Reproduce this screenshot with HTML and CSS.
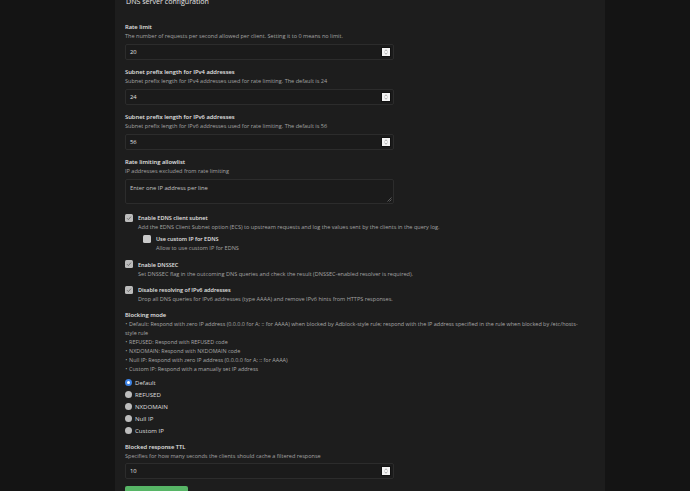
FILE: index.html
```html
<!DOCTYPE html>
<html lang="en">
<head>
<meta charset="utf-8">
<title>DNS server configuration</title>
<link rel="stylesheet" href="styles.css">
</head>
<body>
<div class="page">
  <div class="card">
    <h2 class="title">DNS server configuration</h2>
    <div class="form">
      <div class="field">
        <div class="label">Rate limit</div>
        <div class="desc">The number of requests per second allowed per client. Setting it to 0 means no limit.</div>
        <div class="input"><span>20</span><svg class="spin" viewBox="0 0 8 8" width="8" height="8"><rect x="0" y="0" width="8" height="8" fill="#f4f4f4"/><path d="M2.5 3.2 L4 1.8 L5.5 3.2 M2.5 4.8 L4 6.2 L5.5 4.8" fill="none" stroke="#8a8a8a" stroke-width="0.7"/></svg></div>
      </div>
      <div class="field">
        <div class="label">Subnet prefix length for IPv4 addresses</div>
        <div class="desc">Subnet prefix length for IPv4 addresses used for rate limiting. The default is 24</div>
        <div class="input"><span>24</span><svg class="spin" viewBox="0 0 8 8" width="8" height="8"><rect x="0" y="0" width="8" height="8" fill="#f4f4f4"/><path d="M2.5 3.2 L4 1.8 L5.5 3.2 M2.5 4.8 L4 6.2 L5.5 4.8" fill="none" stroke="#8a8a8a" stroke-width="0.7"/></svg></div>
      </div>
      <div class="field">
        <div class="label">Subnet prefix length for IPv6 addresses</div>
        <div class="desc">Subnet prefix length for IPv6 addresses used for rate limiting. The default is 56</div>
        <div class="input"><span>56</span><svg class="spin" viewBox="0 0 8 8" width="8" height="8"><rect x="0" y="0" width="8" height="8" fill="#f4f4f4"/><path d="M2.5 3.2 L4 1.8 L5.5 3.2 M2.5 4.8 L4 6.2 L5.5 4.8" fill="none" stroke="#8a8a8a" stroke-width="0.7"/></svg></div>
      </div>
      <div class="field">
        <div class="label">Rate limiting allowlist</div>
        <div class="desc">IP addresses excluded from rate limiting</div>
        <div class="textarea"><span class="placeholder">Enter one IP address per line</span><svg class="grip" viewBox="0 0 5 5" width="5" height="5"><path d="M0.5 4.5 L4.5 0.5 M2.5 4.5 L4.5 2.5" stroke="#777" stroke-width="0.7"/></svg></div>
      </div>

      <div class="checks">
        <div class="check">
          <span class="box checked"><svg viewBox="0 0 8 8" width="8" height="8"><path d="M2 4.2 L3.4 5.6 L6 2.6" fill="none" stroke="#666" stroke-width="0.9"/></svg></span>
          <div class="check-text">
            <div class="clabel">Enable EDNS client subnet</div>
            <div class="desc">Add the EDNS Client Subnet option (ECS) to upstream requests and log the values sent by the clients in the query log.</div>
            <div class="check nested">
              <span class="box"></span>
              <div class="check-text">
                <div class="clabel">Use custom IP for EDNS</div>
                <div class="desc">Allow to use custom IP for EDNS</div>
              </div>
            </div>
          </div>
        </div>
        <div class="check">
          <span class="box checked"><svg viewBox="0 0 8 8" width="8" height="8"><path d="M2 4.2 L3.4 5.6 L6 2.6" fill="none" stroke="#666" stroke-width="0.9"/></svg></span>
          <div class="check-text">
            <div class="clabel">Enable DNSSEC</div>
            <div class="desc">Set DNSSEC flag in the outcoming DNS queries and check the result (DNSSEC-enabled resolver is required).</div>
          </div>
        </div>
        <div class="check">
          <span class="box checked"><svg viewBox="0 0 8 8" width="8" height="8"><path d="M2 4.2 L3.4 5.6 L6 2.6" fill="none" stroke="#666" stroke-width="0.9"/></svg></span>
          <div class="check-text">
            <div class="clabel">Disable resolving of IPv6 addresses</div>
            <div class="desc">Drop all DNS queries for IPv6 addresses (type AAAA) and remove IPv6 hints from HTTPS responses.</div>
          </div>
        </div>
      </div>

      <div class="mode">
        <div class="label">Blocking mode</div>
        <ul class="bullets">
          <li>Default: Respond with zero IP address (0.0.0.0 for A; :: for AAAA) when blocked by Adblock-style rule; respond with the IP address specified in the rule when blocked by /etc/hosts-style rule</li>
          <li>REFUSED: Respond with REFUSED code</li>
          <li>NXDOMAIN: Respond with NXDOMAIN code</li>
          <li>Null IP: Respond with zero IP address (0.0.0.0 for A; :: for AAAA)</li>
          <li>Custom IP: Respond with a manually set IP address</li>
        </ul>
        <div class="radios">
          <div class="radio"><span class="dot on"></span><span>Default</span></div>
          <div class="radio"><span class="dot"></span><span>REFUSED</span></div>
          <div class="radio"><span class="dot"></span><span>NXDOMAIN</span></div>
          <div class="radio"><span class="dot"></span><span>Null IP</span></div>
          <div class="radio"><span class="dot"></span><span>Custom IP</span></div>
        </div>
      </div>

      <div class="field ttl">
        <div class="label">Blocked response TTL</div>
        <div class="desc">Specifies for how many seconds the clients should cache a filtered response</div>
        <div class="input"><span>10</span><svg class="spin" viewBox="0 0 8 8" width="8" height="8"><rect x="0" y="0" width="8" height="8" fill="#f4f4f4"/><path d="M2.5 3.2 L4 1.8 L5.5 3.2 M2.5 4.8 L4 6.2 L5.5 4.8" fill="none" stroke="#8a8a8a" stroke-width="0.7"/></svg></div>
      </div>

      <button class="save">Save</button>
    </div>
  </div>
</div>
</body>
</html>
```

FILE: styles.css
```css
* {
  box-sizing: border-box;
  margin: 0;
  padding: 0;
}

html, body {
  height: 100%;
}

body {
  background: #141414;
  font-family: "Open Sans", "Liberation Sans", sans-serif;
  color: #e2e2e2;
  overflow: hidden;
}

.page {
  padding-left: 115px;
  height: 491px;
  overflow: hidden;
}

.card {
  width: 490px;
  min-height: 530px;
  margin-top: -4px;
  padding: 0 20px 20px 10px;
  background: #1d1d1d;
}

.title {
  font-size: 7.1px;
  line-height: 10px;
  font-weight: 400;
  color: #e6e6e6;
  padding-left: 1px;
}

.form {
  margin-top: 17px;
}

.field {
  margin-bottom: 8px;
}

.label {
  font-size: 5.8px;
  line-height: 9px;
  font-weight: 600;
  color: #e4e4e4;
}

.desc {
  font-size: 5.55px;
  line-height: 9px;
  color: #a4a4a4;
}

.input {
  width: 269px;
  height: 16px;
  margin-top: 3px;
  display: flex;
  align-items: center;
  justify-content: space-between;
  padding: 0 3px 0 4px;
  border: 1px solid #2c2c2c;
  border-radius: 2px;
  background: #1b1b1b;
  font-size: 5.8px;
  color: #e2e2e2;
}

.spin {
  display: block;
  outline: 0.6px solid #111;
}

.textarea {
  position: relative;
  width: 269px;
  height: 25px;
  margin-top: 3px;
  padding: 3.5px 4px;
  border: 1px solid #2c2c2c;
  border-radius: 2px;
  background: #1b1b1b;
  font-size: 5.8px;
  line-height: 9px;
}

.placeholder {
  color: #c4c4c4;
}

.grip {
  position: absolute;
  right: 1px;
  bottom: 1px;
}

.checks {
  margin-top: 9px;
}

.check {
  display: flex;
  align-items: flex-start;
  gap: 5px;
  margin-bottom: 6.5px;
}

.check.nested {
  margin: 2px 0 0 5px;
}

.box {
  flex: none;
  width: 8px;
  height: 8px;
  margin-top: 0.5px;
  border-radius: 1.5px;
  background: #c9c9c9;
  display: flex;
}

.box.checked {
  background: #bcbcbc;
}

.clabel {
  font-size: 5.5px;
  line-height: 10px;
  font-weight: 600;
  color: #e4e4e4;
}

.mode {
  margin-top: 0.5px;
}

.bullets {
  list-style: none;
  font-size: 5.45px;
  line-height: 9px;
  color: #a8a8a8;
  width: 464px;
}

.bullets li::before {
  content: "\2022";
  margin: 0 1.8px 0 0.6px;
  font-size: 4.5px;
}

.radios {
  margin-top: 2.5px;
}

.radio {
  display: flex;
  align-items: center;
  gap: 3px;
  height: 12px;
  font-size: 6.1px;
  color: #dedede;
}

.dot {
  flex: none;
  width: 7px;
  height: 7px;
  border-radius: 50%;
  background: #bdbdbd;
}

.dot.on {
  background: #ffffff;
  border: 2.2px solid #3d83e6;
}

.ttl {
  margin-top: 6.5px;
  margin-bottom: 0;
}

.ttl .input {
  margin-top: 2.5px;
}

.save {
  display: block;
  margin-top: 7px;
  width: 63px;
  height: 18px;
  border: none;
  border-radius: 2px;
  background: #57b566;
  color: #ffffff;
  font-family: inherit;
  font-size: 6px;
  font-weight: 600;
}
```
